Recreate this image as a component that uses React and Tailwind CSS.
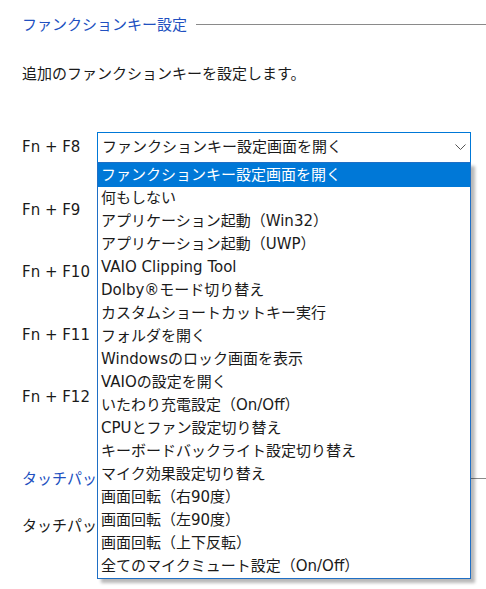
import React from 'react';

const font = { fontFamily: '"DejaVu Sans", "Noto Sans CJK JP", sans-serif' };

const OPTIONS = [
    'ファンクションキー設定画面を開く',
    '何もしない',
    'アプリケーション起動（Win32）',
    'アプリケーション起動（UWP）',
    'VAIO Clipping Tool',
    'Dolby®モード切り替え',
    'カスタムショートカットキー実行',
    'フォルダを開く',
    'Windowsのロック画面を表示',
    'VAIOの設定を開く',
    'いたわり充電設定（On/Off）',
    'CPUとファン設定切り替え',
    'キーボードバックライト設定切り替え',
    'マイク効果設定切り替え',
    '画面回転（右90度）',
    '画面回転（左90度）',
    '画面回転（上下反転）',
    '全てのマイクミュート設定（On/Off）',
];

const Chevron = () => (
    <svg width="11" height="7" viewBox="0 0 11 7" fill="none" stroke="#555" strokeWidth="1">
        <path d="M0.5 0.5 L5.5 5.5 L10.5 0.5" />
    </svg>
);

const SectionHeader = ({ title }) => (
    <div className="flex items-center h-[22px]">
        <span className="text-[15px] text-[#2150c0] whitespace-nowrap">{title}</span>
        <div className="flex-1 ml-[9px] -mr-[15px] h-px bg-[#8a8a8a] -translate-y-px" />
    </div>
);

const App = () => {
    return (
        <div className="w-[486px] h-[589px] bg-white overflow-hidden text-[#1a1a1a]" style={font}>
            <div className="pl-[22px] pr-[15px] pt-[14px]">
                <SectionHeader title="ファンクションキー設定" />

                <p className="mt-[27px] text-[15px] leading-[22px]">追加のファンクションキーを設定します。</p>

                <div className="mt-[31px]">
                    {/* Fn + F8 with open dropdown */}
                    <div className="h-[62.5px] flex items-center">
                        <span className="w-[75px] text-[15px]">Fn + F8</span>
                        <div className="relative flex-1">
                            <div className="h-[31px] border border-[#0078d7] flex items-center pl-[4px] pr-[4px]">
                                <span className="flex-1 text-[15px] whitespace-nowrap">{OPTIONS[0]}</span>
                                <Chevron />
                            </div>
                            <ul className="absolute left-0 right-0 top-[30px] z-10 border border-[#1f6fc5] bg-white shadow-[4px_4px_3px_rgba(0,0,0,0.28)]">
                                {OPTIONS.map((o, i) => (
                                    <li
                                        key={o}
                                        className={`flex items-center pl-[3px] text-[15px] whitespace-nowrap ${i === 0 ? 'h-[24px] bg-[#0078d7] text-white' : 'h-[23px]'}`}
                                    >
                                        {o}
                                    </li>
                                ))}
                            </ul>
                        </div>
                    </div>
                    {['Fn + F9', 'Fn + F10', 'Fn + F11', 'Fn + F12'].map(k => (
                        <div key={k} className="h-[62.5px] flex items-center">
                            <span className="w-[75px] text-[15px]">{k}</span>
                            <div className="flex-1 h-[31px] border border-[#999]" />
                        </div>
                    ))}
                </div>

                <div className="mt-[40px]">
                    <SectionHeader title="タッチパッド設定" />
                </div>
                <p className="mt-[24px] text-[15px] leading-[22px]">タッチパッドの設定を変更します。</p>
            </div>
        </div>
    );
};

export default App;
